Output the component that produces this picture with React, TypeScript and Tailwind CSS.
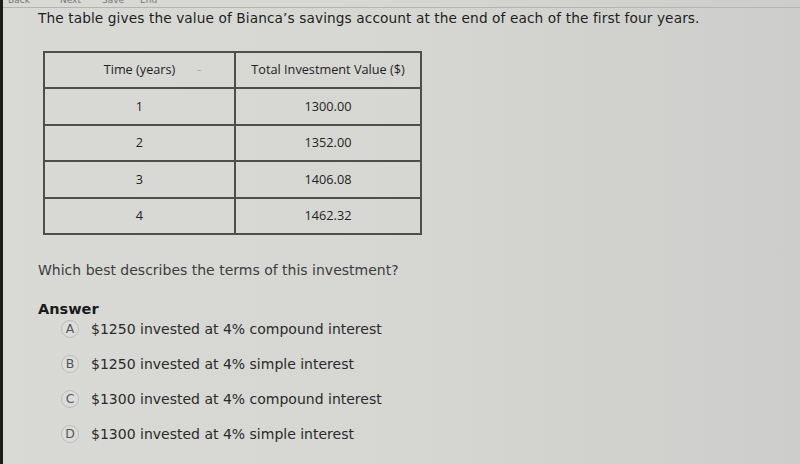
import React from 'react';

const ROWS = [
  { t: '1', v: '1300.00' },
  { t: '2', v: '1352.00' },
  { t: '3', v: '1406.08' },
  { t: '4', v: '1462.32' },
];

const OPTIONS = [
  { key: 'A', text: '$1250 invested at 4% compound interest' },
  { key: 'B', text: '$1250 invested at 4% simple interest' },
  { key: 'C', text: '$1300 invested at 4% compound interest' },
  { key: 'D', text: '$1300 invested at 4% simple interest' },
];

export default function App() {
  return (
    <div className="flex w-[800px] h-[464px] overflow-hidden bg-[#d5d6d2] font-['DejaVu_Sans',sans-serif]">
      <div className="w-[3px] shrink-0 bg-[#1c1c1c]" />
      <div className="flex flex-col flex-1 bg-gradient-to-r from-[#d9dad6] via-[#d6d7d3] to-[#cdcecb]">
        {/* Toolbar strip, mostly cut off */}
        <div className="h-[8px] flex items-end pl-[5px] border-b border-[#b4b5b2] overflow-hidden text-[9px] leading-[9px] text-[#777]">
          <span className="w-[52px] translate-y-[-2px]">Back</span>
          <span className="w-[42px] translate-y-[-2px]">Next</span>
          <span className="w-[38px] translate-y-[-2px]">Save</span>
          <span className="translate-y-[-2px]">End</span>
        </div>

        <div className="pl-[35px] pt-[1px]">
          <p className="text-[13.7px] leading-[18px] text-[#1e1e1e] tracking-[0.1px]">
            The table gives the value of Bianca’s savings account at the end of each of the first four years.
          </p>

          {/* Table */}
          <table className="mt-[24px] ml-[5px] w-[379px] border-collapse font-['Open_Sans',sans-serif] text-[12.7px] text-[#222]">
            <thead>
              <tr className="h-[36px]">
                <th className="w-[191px] border-2 border-[#4e4e4e] font-normal">
                  <span className="relative">
                    Time (years)
                    <span className="absolute left-[calc(100%+22px)] top-0 text-[#aaa]">-</span>
                  </span>
                </th>
                <th className="border-2 border-[#4e4e4e] font-normal">Total Investment Value ($)</th>
              </tr>
            </thead>
            <tbody>
              {ROWS.map((r) => (
                <tr key={r.t} className="h-[36.5px]">
                  <td className="border-2 border-[#4e4e4e] text-center">{r.t}</td>
                  <td className="border-2 border-[#4e4e4e] text-center">{r.v}</td>
                </tr>
              ))}
            </tbody>
          </table>

          <p className="mt-[26px] text-[14px] leading-[18px] text-[#3c3c3c]">
            Which best describes the terms of this investment?
          </p>

          <p className="mt-[21px] text-[14.5px] leading-[18px] font-bold text-[#1a1a1a]">Answer</p>

          <div className="flex flex-col gap-[17px] mt-[2px] pl-[23px]">
            {OPTIONS.map((o) => (
              <div key={o.key} className="flex items-center gap-[12px] h-[18px]">
                <span className="w-[18px] h-[18px] rounded-full border border-[#bdbdbb] bg-[#dcddda] flex items-center justify-center text-[12.5px] text-[#555]">
                  {o.key}
                </span>
                <span className="text-[14px] text-[#2a2a2a]">{o.text}</span>
              </div>
            ))}
          </div>
        </div>
      </div>
    </div>
  );
}
